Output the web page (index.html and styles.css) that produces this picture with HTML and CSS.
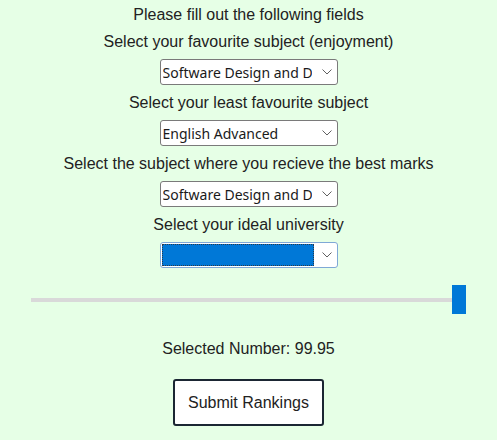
FILE: index.html
```html
<!DOCTYPE html>
<html lang="en">
<head>
<meta charset="utf-8">
<title>Subject Rankings</title>
<link rel="stylesheet" href="styles.css">
</head>
<body>
<main class="form">
  <p class="label">Please fill out the following fields</p>
  <p class="label">Select your favourite subject (enjoyment)</p>
  <span class="select-wrap">
    <select class="select"><option>Software Design and Development</option></select>
    <svg class="chev" width="10" height="6" viewBox="0 0 10 6"><path d="M0.5 0.5 L5 5 L9.5 0.5" fill="none" stroke="#606060" stroke-width="1"/></svg>
  </span>
  <p class="label">Select your least favourite subject</p>
  <span class="select-wrap">
    <select class="select"><option>English Advanced</option></select>
    <svg class="chev" width="10" height="6" viewBox="0 0 10 6"><path d="M0.5 0.5 L5 5 L9.5 0.5" fill="none" stroke="#606060" stroke-width="1"/></svg>
  </span>
  <p class="label">Select the subject where you recieve the best marks</p>
  <span class="select-wrap">
    <select class="select"><option>Software Design and Development</option></select>
    <svg class="chev" width="10" height="6" viewBox="0 0 10 6"><path d="M0.5 0.5 L5 5 L9.5 0.5" fill="none" stroke="#606060" stroke-width="1"/></svg>
  </span>
  <p class="label">Select your ideal university</p>
  <span class="select-wrap focused">
    <select class="select select-focus"><option></option></select>
    <svg class="chev" width="10" height="6" viewBox="0 0 10 6"><path d="M0.5 0.5 L5 5 L9.5 0.5" fill="none" stroke="#606060" stroke-width="1"/></svg>
  </span>
  <input class="slider" type="range" min="0" max="100" step="0.05" value="99.95">
  <p class="label result">Selected Number: 99.95</p>
  <button class="submit" type="button">Submit Rankings</button>
</main>
</body>
</html>
```
FILE: styles.css
```css
html, body {
  margin: 0;
  padding: 0;
  background: #e6ffe6;
}
body {
  font-family: "Liberation Sans", Arial, sans-serif;
  font-size: 16px;
  color: #222222;
}
.form {
  display: flex;
  flex-direction: column;
  align-items: center;
  gap: 8px;
  padding-top: 5px;
}
.label {
  margin: 0;
  line-height: 19px;
}
.select-wrap {
  position: relative;
  display: block;
  width: 178px;
  height: 26px;
}
.select {
  -webkit-appearance: none;
  appearance: none;
  box-sizing: border-box;
  width: 178px;
  height: 26px;
  margin: 0;
  padding: 0 25px 0 2px;
  border: 1px solid #7a7a7a;
  border-radius: 3px;
  background: #ffffff;
  font-family: "Noto Sans", "Open Sans", sans-serif;
  font-size: 14px;
  color: #1a1a1a;
  outline: none;
}
.chev {
  position: absolute;
  right: 6px;
  top: 10px;
  pointer-events: none;
}
.select-focus {
  border-color: #7fa8d6;
}
.focused::before {
  content: "";
  position: absolute;
  left: 2px;
  top: 2px;
  width: 152px;
  height: 22px;
  box-sizing: border-box;
  background: #0078d7;
  border: 1px dotted #2a3a4a;
  pointer-events: none;
  z-index: 1;
}
.slider {
  -webkit-appearance: none;
  appearance: none;
  width: 435px;
  height: 29px;
  margin: 9px 0 0;
  padding: 0;
  background: transparent;
}
.slider::-webkit-slider-runnable-track {
  height: 4px;
  background: #d9d9d9;
  border: none;
}
.slider::-webkit-slider-thumb {
  -webkit-appearance: none;
  appearance: none;
  width: 14px;
  height: 29px;
  margin-top: -12.5px;
  background: #0078d7;
  border: none;
  border-radius: 0;
}
.result {
  margin-top: 17px;
}
.submit {
  box-sizing: border-box;
  width: 151px;
  height: 47px;
  margin-top: 13px;
  padding: 0;
  background: #ffffff;
  border: 2px solid #1b2633;
  border-radius: 3px;
  font-family: "Liberation Sans", Arial, sans-serif;
  font-size: 16px;
  color: #222222;
}
```
